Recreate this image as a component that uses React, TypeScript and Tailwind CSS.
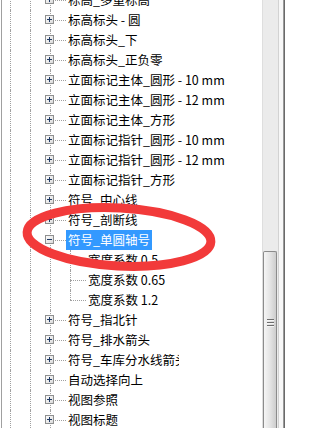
import React from "react";

type Item = { label: string; kind: "node" | "open" | "leaf"; last?: boolean; selected?: boolean; clip?: boolean };

const items: Item[] = [
  { label: "标高_多重标高", kind: "node" },
  { label: "标高标头 - 圆", kind: "node" },
  { label: "标高标头_下", kind: "node" },
  { label: "标高标头_正负零", kind: "node" },
  { label: "立面标记主体_圆形 - 10 mm", kind: "node" },
  { label: "立面标记主体_圆形 - 12 mm", kind: "node" },
  { label: "立面标记主体_方形", kind: "node" },
  { label: "立面标记指针_圆形 - 10 mm", kind: "node" },
  { label: "立面标记指针_圆形 - 12 mm", kind: "node" },
  { label: "立面标记指针_方形", kind: "node" },
  { label: "符号_中心线", kind: "node" },
  { label: "符号_剖断线", kind: "node" },
  { label: "符号_单圆轴号", kind: "open", selected: true },
  { label: "宽度系数 0.5", kind: "leaf" },
  { label: "宽度系数 0.65", kind: "leaf" },
  { label: "宽度系数 1.2", kind: "leaf", last: true },
  { label: "符号_指北针", kind: "node" },
  { label: "符号_排水箭头", kind: "node" },
  { label: "符号_车库分水线箭头", kind: "node", clip: true },
  { label: "自动选择向上", kind: "node" },
  { label: "视图参照", kind: "node" },
  { label: "视图标题", kind: "node" },
];

function Guide({ w = "w-5", half = false }: { w?: string; half?: boolean }) {
  return (
    <div className={`${w} h-5 shrink-0 ${w === "w-5" ? "pl-[10px]" : "pl-[8px]"}`}>
      <div className={`${half ? "h-[10px]" : "h-full"} border-l border-dotted border-[#a0a0a0]`} />
    </div>
  );
}

function Expander({ open }: { open: boolean }) {
  return (
    <svg width="9" height="9" viewBox="0 0 9 9" className="absolute left-[5px] top-[5px]">
      <defs>
        <linearGradient id="bx" x1="0" y1="0" x2="1" y2="1">
          <stop offset="0" stopColor="#ffffff" />
          <stop offset="1" stopColor="#d9d9d9" />
        </linearGradient>
      </defs>
      <rect x="0.5" y="0.5" width="8" height="8" fill="url(#bx)" stroke="#8e8f8f" />
      <rect x="2" y="4" width="5" height="1" fill="#1f3a66" />
      {!open && <rect x="4" y="2" width="1" height="5" fill="#1f3a66" />}
    </svg>
  );
}

function Row({ item }: { item: Item }) {
  const leaf = item.kind === "leaf";
  return (
    <div className="flex h-5 items-stretch">
      <Guide w="w-[18px]" />
      <Guide />
      {leaf ? (
        <>
          <Guide />
          <div className="relative w-5 h-5 shrink-0">
            <div className={`absolute left-[10px] top-0 ${item.last ? "h-[10px]" : "h-full"} border-l border-dotted border-[#a0a0a0]`} />
            <div className="absolute left-[10px] top-[10px] w-[16px] border-t border-dotted border-[#a0a0a0]" />
          </div>
        </>
      ) : (
        <div className="relative w-5 h-5 shrink-0">
          <div className="absolute left-[10px] top-0 h-full border-l border-dotted border-[#a0a0a0]" />
          <div className="absolute left-[15px] top-[10px] w-[11px] border-t border-dotted border-[#a0a0a0]" />
          <Expander open={item.kind === "open"} />
        </div>
      )}
      <span
        className={`ml-[6px] px-[2px] h-5 leading-5 whitespace-nowrap text-[12.5px] ${
          item.selected ? "bg-[#3399ff] text-white" : "text-black"
        } ${item.clip ? "max-w-[113px] overflow-hidden" : ""}`}
      >
        {item.label}
      </span>
    </div>
  );
}

function Scrollbar() {
  return (
    <div className="w-[17px] h-full shrink-0 flex flex-col bg-[#ebebeb] border-l border-r border-l-[#dedede] border-r-[#d2d2d2]">
      <div className="h-[251px] shrink-0" />
      <div className="flex-1 mr-[1px] rounded-t-[2px] border border-b-0 border-[#8b8b8b] bg-gradient-to-r from-[#f5f5f5] via-[#e4e4e4] to-[#cdcdcd] flex flex-col items-center">
        <div className="mt-[67px] flex flex-col gap-[1px] w-[7px]">
          <div className="h-[2px] bg-[#6e6e6e] border-b border-[#f5f5f5]" />
          <div className="h-[2px] bg-[#6e6e6e] border-b border-[#f5f5f5]" />
          <div className="h-[2px] bg-[#6e6e6e] border-b border-[#f5f5f5]" />
        </div>
      </div>
    </div>
  );
}

export default function App() {
  return (
    <div className="relative w-[329px] h-[428px] overflow-hidden bg-white flex font-['Noto_Sans_CJK_SC','Microsoft_YaHei',sans-serif]">
      <div className="w-[2px] shrink-0 border-r border-[#a0a0a0]" />
      <div className="w-[260px] shrink-0 overflow-hidden">
        <div className="-mt-[10px]">
          {items.map((it, i) => (
            <Row key={i} item={it} />
          ))}
        </div>
      </div>
      <Scrollbar />
      <div className="w-[4px] shrink-0 bg-[#f7f7f7]" />
      <div className="w-px shrink-0 bg-[#9a9a9a]" />
      <div className="w-px shrink-0 bg-[#6a6a6a]" />
      <div className="flex-1 bg-white" />
      <svg className="absolute left-0 top-0 pointer-events-none" width="329" height="428">
        <ellipse cx="119" cy="237" rx="92" ry="29" transform="rotate(3 119 237)" fill="none" stroke="#f23a3a" strokeWidth="9" />
      </svg>
    </div>
  );
}
